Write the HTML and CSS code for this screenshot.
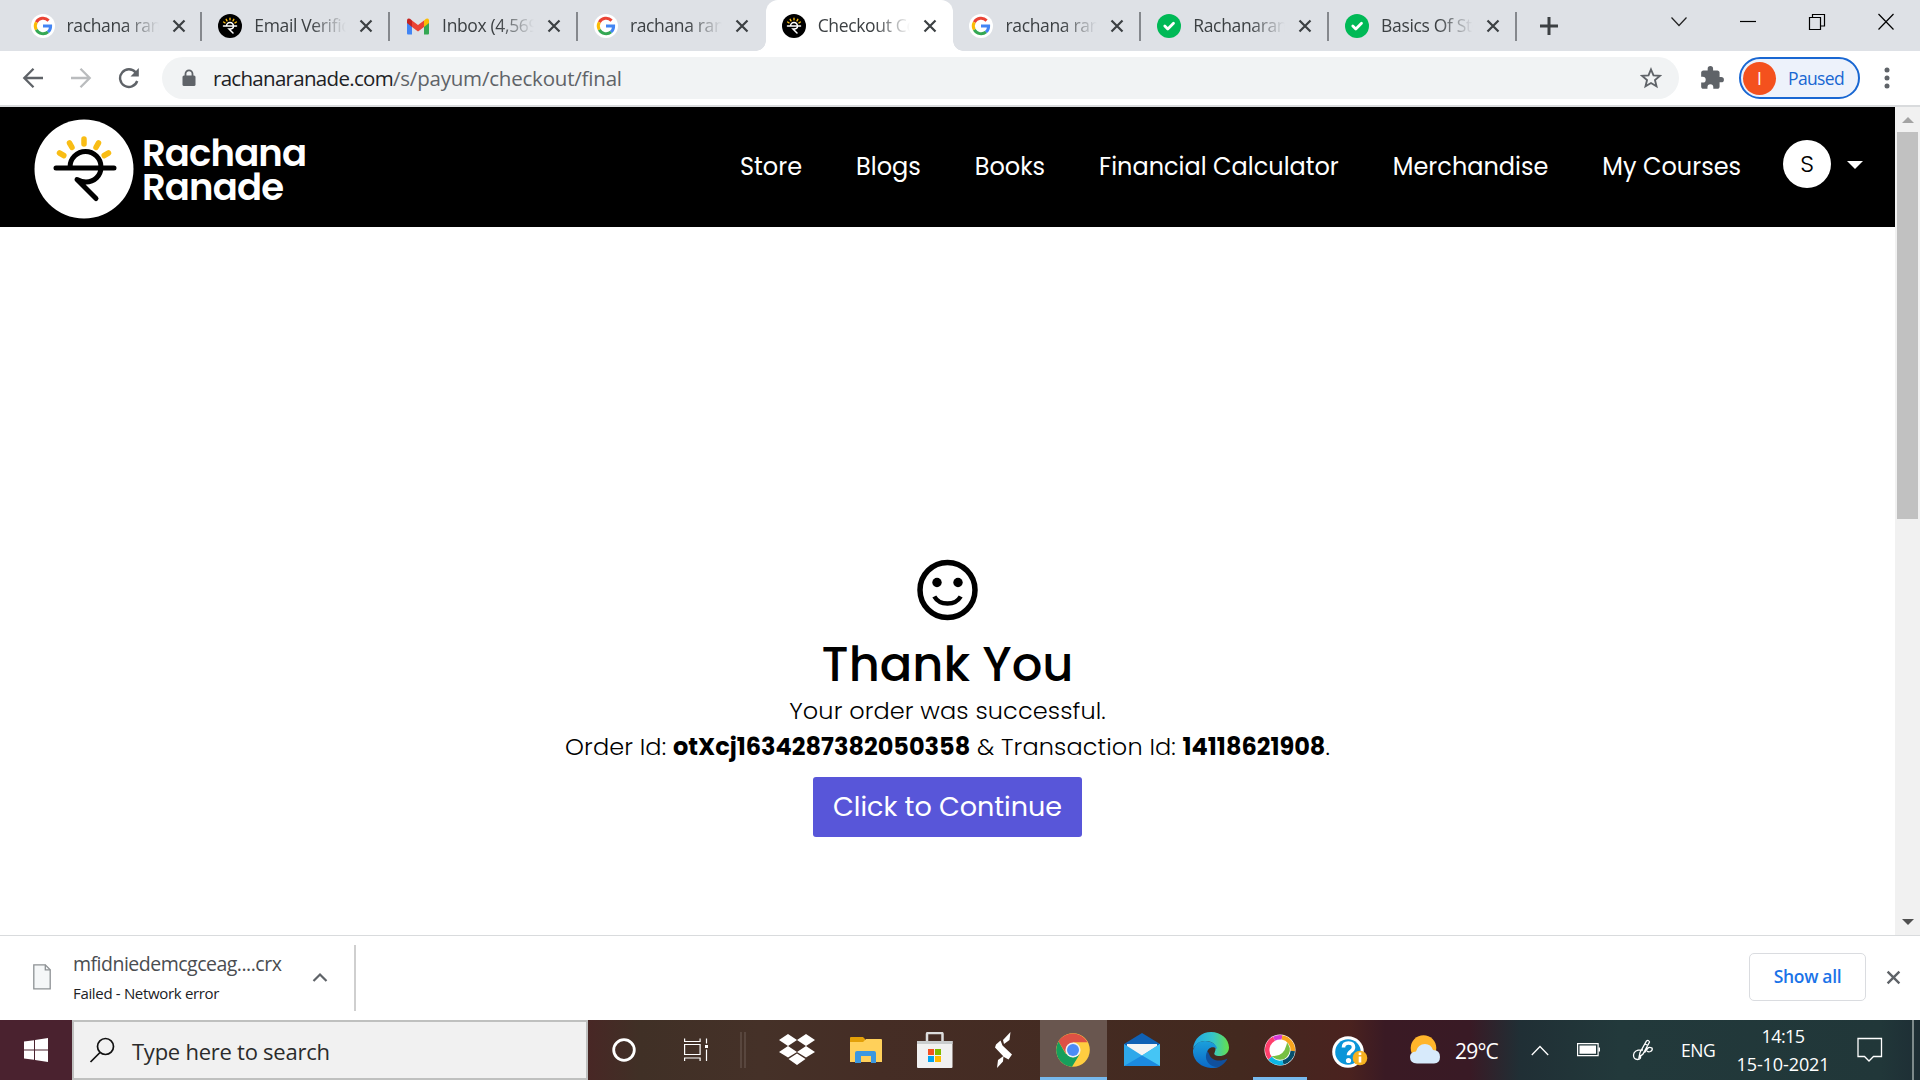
FILE: index.html
```html
<!DOCTYPE html>
<html lang="en">
<head>
<meta charset="utf-8">
<title>Checkout</title>
<link rel="stylesheet" href="styles.css">
</head>
<body>
<svg class="defs" width="0" height="0">
  <defs>
    <symbol id="google" viewBox="0 0 24 24">
      <circle cx="12" cy="12" r="12" fill="#fff"/>
      <path d="M5.3 8.2A7.8 7.8 0 0 1 17.6 6.6" fill="none" stroke="#ea4335" stroke-width="3"/>
      <path d="M5.3 8.2a7.8 7.8 0 0 0 0 7.6" fill="none" stroke="#fbbc05" stroke-width="3"/>
      <path d="M5.3 15.8a7.8 7.8 0 0 0 11.8 2.1" fill="none" stroke="#34a853" stroke-width="3"/>
      <path d="M12 12h7.6a7.8 7.8 0 0 1-2.6 6" fill="none" stroke="#4285f4" stroke-width="3"/>
    </symbol>
    <symbol id="rr" viewBox="0 0 24 24">
      <circle cx="12" cy="12" r="12" fill="#000"/>
      <path d="M5.500 12h13M8.500 12a3.500 3.500 0 0 1 7 0q0 3-3.500 3h-1l4 4" fill="none" stroke="#fff" stroke-width="1.500" stroke-linecap="round"/>
      <path d="M12 4.200v1.600M8.200 5.300l.8 1.500M15.800 5.300l-.8 1.500M5.600 8l1.400.8M18.400 8l-1.400.8" stroke="#f9bd15" stroke-width="1.400" stroke-linecap="round"/>
    </symbol>
    <symbol id="gmail" viewBox="0 0 24 24">
      <path d="M1 6v13.500q0 1 1 1h4V11z" fill="#4285f4"/>
      <path d="M23 6v13.500q0 1-1 1h-4V11z" fill="#34a853"/>
      <path d="M18 6.500l2-1.700q3-1.300 3 2V9l-5 4z" fill="#fbbc04"/>
      <path d="M6 6.500l6 4.500 6-4.500V13l-6 4.500L6 13z" fill="#ea4335"/>
      <path d="M6 6.500L4 4.800q-3-1.300-3 2V9l5 4z" fill="#c5221f"/>
    </symbol>
    <symbol id="ok" viewBox="0 0 24 24">
      <circle cx="12" cy="12" r="12" fill="#00b956"/>
      <path d="M7.800 12l3 3 5.700-5.700" fill="none" stroke="#fff" stroke-width="2.800" stroke-linecap="round" stroke-linejoin="round"/>
    </symbol>
    <symbol id="x" viewBox="0 0 14 14">
      <path d="M1.500 1.500l11 11M12.500 1.500l-11 11" stroke="currentColor" stroke-width="2.200"/>
    </symbol>
  </defs>
</svg>
<div class="screen">
  <div class="tabs">
    <div class="tab"><svg class="fav"><use href="#google"/></svg><span class="title">rachana ranade</span><svg class="close"><use href="#x"/></svg></div>
    <div class="tab"><svg class="fav"><use href="#rr"/></svg><span class="title">Email Verification</span><svg class="close"><use href="#x"/></svg></div>
    <div class="tab"><svg class="fav"><use href="#gmail"/></svg><span class="title">Inbox (4,569)</span><svg class="close"><use href="#x"/></svg></div>
    <div class="tab"><svg class="fav"><use href="#google"/></svg><span class="title">rachana ranade</span><svg class="close"><use href="#x"/></svg></div>
    <div class="tab active"><svg class="fav"><use href="#rr"/></svg><span class="title">Checkout Completed</span><svg class="close"><use href="#x"/></svg></div>
    <div class="tab"><svg class="fav"><use href="#google"/></svg><span class="title">rachana ranade</span><svg class="close"><use href="#x"/></svg></div>
    <div class="tab"><svg class="fav"><use href="#ok"/></svg><span class="title">Rachanaranade</span><svg class="close"><use href="#x"/></svg></div>
    <div class="tab"><svg class="fav"><use href="#ok"/></svg><span class="title">Basics Of Stock</span><svg class="close"><use href="#x"/></svg></div>
    <svg class="plus" width="18" height="18"><path d="M9 0v18M0 9h18" stroke="#3c4043" stroke-width="3"/></svg>
    <div class="window-buttons">
      <svg width="18" height="18"><path d="M1.500 4.500l7.500 8 7.500-8" fill="none" stroke="#222" stroke-width="1.200"/></svg>
      <svg width="18" height="18"><path d="M1 8.500h16" stroke="#000" stroke-width="1.200"/></svg>
      <svg width="18" height="18"><path d="M1.500 4.500h11v12h-11zM4.500 4.500v-3h12v11.500h-4" fill="none" stroke="#000" stroke-width="1.200"/></svg>
      <svg width="18" height="18"><path d="M1.500 1l15 15.500M16.500 1l-15 15.500" stroke="#000" stroke-width="1.200"/></svg>
    </div>
  </div>

  <div class="toolbar">
    <svg class="back" width="22" height="22"><path d="M21 11H2.500M11.500 1.800L2.300 11l9.200 9.200" fill="none" stroke="#5f6368" stroke-width="2.300"/></svg>
    <svg class="forward" width="22" height="22"><path d="M1 11h18.500M10.500 1.800l9.200 9.200-9.200 9.200" fill="none" stroke="#babcbe" stroke-width="2.300"/></svg>
    <svg class="reload" width="22" height="22"><path d="M17.700 5.500A8.800 8.800 0 1 0 19.200 14" fill="none" stroke="#5f6368" stroke-width="2.400"/><path d="M20.800 1v8.500H12.500z" fill="#5f6368"/></svg>
    <div class="omnibox">
      <svg class="lock" width="14" height="18"><rect x="0.500" y="6.500" width="13" height="10.500" rx="1.500" fill="#5f6368"/><path d="M3.500 7V4.800a3.500 3.500 0 0 1 7 0V7" fill="none" stroke="#5f6368" stroke-width="1.800"/></svg>
      <span class="url"><span class="host">rachanaranade.com</span><span class="path">/s/payum/checkout/final</span></span>
      <svg class="star" width="22" height="22" viewBox="0 0 22 22"><path d="M11 2.500l2.500 5.900 6.300.5-4.800 4.200 1.500 6.200-5.500-3.300-5.500 3.300L7 13.100 2.200 8.900l6.300-.5z" fill="none" stroke="#5f6368" stroke-width="1.900"/></svg>
    </div>
    <svg class="puzzle" width="26" height="26" viewBox="0 0 24 24"><path fill="#5f6368" d="M20.500 11H19V7c0-1.100-.9-2-2-2h-4V3.500a2.500 2.500 0 0 0-5 0V5H4c-1.100 0-2 .9-2 2v3.800h1.500a2.700 2.700 0 0 1 0 5.400H2V20c0 1.100.9 2 2 2h3.800v-1.500a2.700 2.700 0 0 1 5.400 0V22H17c1.100 0 2-.9 2-2v-4h1.500a2.500 2.500 0 0 0 0-5z"/></svg>
    <div class="profile"><span class="initial">I</span><span class="state">Paused</span></div>
    <svg class="dots" width="6" height="22"><g fill="#5f6368"><circle cx="3" cy="3" r="2.500"/><circle cx="3" cy="11" r="2.500"/><circle cx="3" cy="19" r="2.500"/></g></svg>
  </div>

  <div class="viewport">
    <div class="page">
      <header class="site-header">
        <svg class="mark" width="100" height="100" viewBox="0 0 100 100">
          <circle cx="50" cy="50" r="49.500" fill="#fff"/>
          <path d="M22 49h58M36 48a15.500 15.500 0 0 1 31 0C67 57 60 63 52 63Q48 63 43 60.500L62 79.500" fill="none" stroke="#000" stroke-width="5" stroke-linecap="round" stroke-linejoin="round"/>
          <path d="M50 20v5M35.500 24l2.500 4.300M64.500 24L62 28.300M25.500 34l4.300 2.500M74.500 34l-4.300 2.500" stroke="#f9bd15" stroke-width="5.500" stroke-linecap="round"/>
        </svg>
        <div class="brand"><span>Rachana</span><span>Ranade</span></div>
        <nav class="nav">
          <a>Store</a><a>Blogs</a><a>Books</a><a>Financial Calculator</a><a>Merchandise</a><a>My Courses</a>
        </nav>
        <span class="avatar">S</span>
        <svg class="caret" width="16" height="8"><path d="M0 0h16L8 8z" fill="#fff"/></svg>
      </header>
      <main class="receipt">
        <svg width="62" height="62" viewBox="0 0 62 62"><circle cx="30.500" cy="31" r="27.500" fill="none" stroke="#000" stroke-width="5.500"/><circle cx="20" cy="23.500" r="4.700"/><circle cx="41" cy="23.500" r="4.700"/><path d="M17.300 37.500q4 7 13.200 7t13.200-7" fill="none" stroke="#000" stroke-width="4.500"/></svg>
        <h1>Thank You</h1>
        <p class="line">Your order was successful.</p>
        <p class="line">Order Id: <b>otXcj1634287382050358</b> &amp; Transaction Id: <b>14118621908</b>.</p>
        <a class="button">Click to Continue</a>
      </main>
    </div>
    <div class="scrollbar">
      <svg width="12" height="6"><path d="M6 0l6 6H0z" fill="#a3a3a3"/></svg>
      <div class="thumb"></div>
      <svg class="down" width="12" height="6"><path d="M0 0h12L6 6z" fill="#505050"/></svg>
    </div>
  </div>

  <div class="downloads">
    <svg class="file" width="18" height="26"><path d="M.8.800h11.500l4.900 5v19H.8z" fill="#f5f7f8" stroke="#8d9194" stroke-width="1.300"/><path d="M12.300.8v5h4.900" fill="none" stroke="#8d9194" stroke-width="1.300"/></svg>
    <div class="file-text"><span class="name">mfidniedemcgceag....crx</span><span class="status">Failed - Network error</span></div>
    <svg class="up" width="16" height="10"><path d="M1.500 9L8 2.500 14.500 9" fill="none" stroke="#5f6368" stroke-width="2.200"/></svg>
    <div class="divider"></div>
    <div class="show-all">Show all</div>
    <svg class="dismiss"><use href="#x"/></svg>
  </div>

  <div class="taskbar">
    <div class="slot start"><svg width="24" height="24"><path d="M0 3.600l10-1.400v9.300H0zM11 2l13-2v11.500H11zM0 12.500h10v9.300L0 20.400zM11 12.500h13V24l-13-2z" fill="#fff"/></svg></div>
    <div class="search"><svg width="26" height="26"><circle cx="16.500" cy="9.500" r="8" fill="none" stroke="#111" stroke-width="1.700"/><path d="M11 15.500L1.500 25" stroke="#111" stroke-width="1.700"/></svg><span class="hint">Type here to search</span></div>
    <div class="slot w72"><svg width="24" height="24"><circle cx="12" cy="12" r="10.300" fill="none" stroke="#fff" stroke-width="2.800"/></svg></div>
    <div class="slot w72"><svg width="24" height="24" fill="none" stroke="#fff" stroke-width="1.200"><path d="M.6 6.500h15.500v10H.6zM.6.500v3h15.500v-3M.6 23v-3h15.500v3M22.500.500v5M22.500 11.500V23"/><path d="M21 7h3v3h-3z" fill="#fff" stroke="none"/></svg></div>
    <div class="slot w22"><svg width="6" height="36"><path d="M1 0v36M5 0v36" stroke="#6d5d55" stroke-width="1"/></svg></div>
    <div class="slot w86"><svg width="36" height="32"><path d="M9 0l9 6-9 6-9-6zM27 0l9 6-9 6-9-6zM9 12l9 6-9 5.500L0 18zM27 12l9 6-9 5.500L18 18zM18 19.500l8.500 5.500L18 31l-8.500-6z" fill="#fff"/></svg></div>
    <div class="slot w52"><svg width="32" height="28"><path d="M0 2q0-1 1-1h12l2 2v5H0z" fill="#e3a008"/><path d="M0 6h13l3-3h15q1 0 1 1v22H0z" fill="#ffd05a"/><path d="M5 27V17q0-2 2-2h17q2 0 2 2v10h-5v-7H11v7z" fill="#3b97e0"/></svg></div>
    <div class="slot w85"><svg width="36" height="36"><path d="M10 10V2q0-1 1-1h13.500q1 0 1 1v8" fill="none" stroke="#ddd" stroke-width="2.500"/><path d="M0 9h35.500v26q0 1-1 1H1q-1 0-1-1z" fill="#f1f1f1"/><path d="M0 9h35.500v3H0z" fill="#c9cccd"/><path d="M11 17h6v6h-6z" fill="#f25022"/><path d="M18 17h6v6h-6z" fill="#7fba00"/><path d="M11 24h6v6h-6z" fill="#00a4ef"/><path d="M18 24h6v6h-6z" fill="#ffb900"/></svg></div>
    <div class="slot w53"><svg width="18" height="36"><path d="M15.500 0L14.500 8 9 12l-1-4zM5.500 8.500l2 5L17 22.500 13.500 27.500 9 25 0 15.500 1 12.500zM2 36l1-8 5.500-4-.5 5.500z" fill="#fff"/></svg></div>
    <div class="slot chrome"><svg width="34" height="34" viewBox="0 0 34 34"><circle cx="17" cy="17" r="16.800" fill="#ffcd40"/><path d="M31.500 9.200H17v7L10 20.500 2.500 8.500A16.800 16.800 0 0 1 31.500 9.200z" fill="#de5144"/><path d="M2.500 8.500A16.800 16.800 0 0 0 16 33.800l7.500-12.300L17 24.500l-7.500-4z" fill="#169f5c"/><circle cx="17" cy="17" r="7.600" fill="#f1f1f1"/><circle cx="17" cy="17" r="6" fill="#4c8bf5"/></svg></div>
    <div class="slot w70"><svg width="36" height="34"><path d="M0 11L18 0l18 11v5H0z" fill="#0f61b5"/><path d="M3 11h30v9L18 30 3 20z" fill="#f4f4f4"/><path d="M0 11l18 11.500L36 11v22H0z" fill="#2ea8ea"/><path d="M36 11L18 22.500 36 33z" fill="#45c5f5"/><path d="M18 22.500L0 33h36z" fill="#1b8ae0"/></svg></div>
    <div class="slot w68"><svg width="36" height="36" viewBox="0 0 36 36">
      <defs><linearGradient id="eg" x1="0" x2="1"><stop offset="0" stop-color="#1fa6e6"/><stop offset=".55" stop-color="#35c5ca"/><stop offset="1" stop-color="#66e04a"/></linearGradient><linearGradient id="eb" x1="0" y1="0" x2="0" y2="1"><stop offset="0" stop-color="#1ba0dc"/><stop offset="1" stop-color="#0b69c7"/></linearGradient></defs>
      <path d="M0 17C1 6 9 0 18 0c10 0 18 7 18 15.500 0 6-5 8.500-9.500 8.500-4 0-6-1.500-5-3C25 13 20 9 12 9 6 9 2 13 0 17z" fill="url(#eg)"/>
      <path d="M0 18C2 12 6 9 12 9c7 0 12 4 12 8-4-4-11-1-10 6 1 6 6 10 12 12-13 4-27-4-26-17z" fill="url(#eb)"/>
      <path d="M14.500 19c-5 9 3 17 11.500 16 4-2 7-5 8.500-8.500-8 4-16 2-18-3.500q-.8-2-2-4z" fill="#10509d"/></svg></div>
    <div class="slot webex"><svg width="32" height="32"><circle cx="16" cy="16" r="15.500" fill="#fff"/><g fill="none" stroke-width="4.500"><path d="M10 4.700A12.800 12.800 0 0 1 18 3.400" stroke="#d63bd8"/><path d="M18 3.400A12.800 12.800 0 0 1 28.800 17" stroke="#f7a41d"/><path d="M28.800 17A12.800 12.800 0 0 1 19 28.500" stroke="#07506c"/><path d="M19 28.500A12.800 12.800 0 0 1 6 24" stroke="#0db5e5"/><path d="M6 24A12.800 12.800 0 0 1 10 4.700" stroke="#ff3f6c"/></g><path d="M23.500 11a9 9 0 0 1-13 12q10 0 13-12z" fill="#77c043" stroke="#77c043" stroke-width="2"/></svg></div>
    <div class="slot w70"><svg class="help" width="36" height="34"><circle cx="16" cy="17" r="15.800" fill="#fff"/><circle cx="16" cy="17" r="12.800" fill="#0a95d8"/><path d="M11.500 12.500q0-4.500 5-4.500t5 4.200q0 2.300-2.500 4-2.500 1.600-2.500 4" fill="none" stroke="#fff" stroke-width="3.600"/><circle cx="16.500" cy="25.500" r="2.600" fill="#fff"/><circle cx="28" cy="23" r="7.300" fill="#f5b120"/><path d="M28 21.500v6M28 17.500v2.500" stroke="#fff" stroke-width="2.600"/></svg></div>
    <div class="weather"><svg width="32" height="30"><circle cx="14.500" cy="13" r="12.800" fill="#ffb52b"/><path d="M8 28.500q-7-.5-7-6.500 0-5 6-5.500Q9 9 16 9q6 0 8 6 7 0 7 7 0 6-6 6.500z" fill="#d7eafb"/></svg><span class="temp">29°C</span></div>
    <svg class="chev" width="18" height="11"><path d="M.8 10L9 1.500 17.200 10" fill="none" stroke="#fff" stroke-width="1.300"/></svg>
    <svg class="battery" width="24" height="14"><path d="M.6.600h20.500v12H.6z" fill="none" stroke="#fff" stroke-width="1.200"/><path d="M2.500 2.500h16.500v8.200H2.500zM21.500 4.500h1.500v4h-1.500z" fill="#fff"/></svg>
    <svg class="pen" width="22" height="22" fill="none" stroke="#fff" stroke-width="1.300"><path d="M7 18.500L8 13.500 14.500 2q2-1.500 3 1L11 15zM13 5l3 1.500M11 11Q2 10.500 1.500 16q0 4.500 4 4.500 4 0 3-4.500M12.500 13.500l3-4q1.500-2 4.500-.5 1 2-1.500 3.500-2 1-3.500-.5"/></svg>
    <span class="lang">ENG</span>
    <div class="clock"><span class="time">14:15</span><span class="date">15-10-2021</span></div>
    <svg class="note" width="26" height="26"><path d="M1 1.500h23.500v18h-8L12 24l-4.500-4.500H1z" fill="none" stroke="#fff" stroke-width="1.300"/></svg>
    <div class="peek"></div>
  </div>
</div>
</body>
</html>
```
FILE: styles.css
```css
* { box-sizing: border-box; }
body { margin: 0; font-family: "Open Sans", "Noto Sans", sans-serif; color: #000; background: #fff; }
svg { display: block; flex: none; }
.defs { position: absolute; }
.screen { width: 1920px; height: 1080px; display: flex; flex-direction: column; overflow: hidden; white-space: nowrap; }
.screen > div { flex: none; }

/* Tab strip */
.tabs { height: 51px; background: #dee1e6; display: flex; align-items: stretch; padding-left: 14.5px; }
.tab { width: 187.8px; flex: none; display: flex; align-items: center; padding-left: 16px; background: linear-gradient(#85888d, #85888d) right 12px / 2px 29px no-repeat; }
.tab:nth-child(4), .tab.active { background: none; }
.tab.active { background: #fff; border-radius: 12px 12px 0 0; position: relative; }
.tab.active::before, .tab.active::after { content: ""; position: absolute; bottom: 0; width: 10px; height: 10px; }
.tab.active::before { left: -10px; background: radial-gradient(circle at 0 0, transparent 9.5px, #fff 10px); }
.tab.active::after { right: -10px; background: radial-gradient(circle at 100% 0, transparent 9.5px, #fff 10px); }
.fav { width: 24px; height: 24px; }
.title { width: 92px; margin: 0 1px 1px 12px; overflow: hidden; font-size: 17.5px; letter-spacing: -0.35px; color: #3c4043; -webkit-mask-image: linear-gradient(90deg, #000 62%, transparent); mask-image: linear-gradient(90deg, #000 62%, transparent); }
.close { width: 14px; height: 14px; margin-left: 12px; color: #3c4043; }
.plus { margin: 17px 0 0 23px; }
.window-buttons { display: flex; gap: 51px; margin: 13px 0 0 112px; }

/* Toolbar */
.toolbar { height: 56px; border-bottom: 2px solid #d9dbdd; display: flex; align-items: center; }
.back { margin-left: 22px; }
.forward { margin-left: 26px; }
.reload { margin-left: 26px; }
.omnibox { width: 1517px; height: 42px; margin-left: 22px; border-radius: 21px; background: #f1f3f4; display: flex; align-items: center; padding: 0 17px 0 20px; }
.url { margin: 0 auto 0 17px; font-size: 20.5px; color: #5f6368; }
.host { color: #202124; letter-spacing: -0.7px; }
.path { letter-spacing: -0.2px; }
.puzzle { margin-left: 20px; }
.profile { width: 121px; height: 42px; margin-left: 14px; border: 2px solid #1967d2; border-radius: 21px; background: #edf2fb; display: flex; align-items: center; padding-left: 2px; color: #1967d2; font-size: 17.5px; }
.initial { width: 33px; height: 33px; border-radius: 50%; background: #f4511e; color: #fff; text-align: center; line-height: 33px; }
.state { margin-left: 12px; letter-spacing: -0.65px; }
.dots { margin-left: 24px; }

/* Web page */
.viewport { height: 828px; display: flex; }
.page { width: 1895px; }
.site-header { height: 120px; background: #000; color: #fff; display: flex; align-items: flex-start; font-family: Poppins, Inter, "Open Sans", sans-serif; }
.mark { margin: 12px 0 0 34px; }
.brand { width: 170px; margin: 29px 0 0 8px; font-size: 37px; font-weight: 600; line-height: 34px; letter-spacing: -0.85px; display: flex; flex-direction: column; align-items: flex-start; }
.nav { display: flex; gap: 54px; margin: 45px 0 0 428px; font-size: 24px; line-height: 30px; }
.avatar { width: 48px; height: 48px; margin: 33px 0 0 auto; border-radius: 50%; background: #fff; color: #000; font-size: 24px; font-weight: 300; line-height: 48px; text-align: center; }
.caret { margin: 54px 32px 0 16px; }
.receipt { display: flex; flex-direction: column; align-items: center; padding-top: 332px; font-family: Poppins, Inter, "Open Sans", sans-serif; }
.receipt h1 { margin: 16px 0 0; font-size: 48px; font-weight: 500; line-height: 56px; }
.line { margin: 0; font-size: 24px; font-weight: 300; line-height: 36px; letter-spacing: 0.12px; }
.line b { font-weight: 700; letter-spacing: 0; }
.button { width: 269px; height: 60px; margin-top: 12px; border-radius: 3px; background: #5856d9; color: #fff; font-size: 27px; line-height: 60px; text-align: center; }
.scrollbar { width: 25px; background: #f1f1f1; display: flex; flex-direction: column; align-items: center; padding: 10px 0; }
.thumb { width: 21px; height: 387px; margin-top: 9px; background: #c1c1c1; }
.down { margin-top: auto; }

/* Download shelf */
.downloads { height: 85px; border-top: 1px solid #d9dbdd; display: flex; align-items: center; padding-bottom: 2px; }
.file { margin-left: 33px; }
.file-text { width: 239px; margin: 2px 0 0 22px; display: flex; flex-direction: column; align-items: flex-start; }
.name { font-size: 19.5px; line-height: 30px; letter-spacing: -0.5px; color: #4a4d51; }
.status { font-size: 15px; line-height: 28px; letter-spacing: -0.33px; color: #202124; }
.divider { width: 2px; height: 66px; margin: 2px 0 0 26px; background: #cfcfcf; }
.show-all { width: 117px; height: 48px; margin-left: auto; border: 1px solid #dadce0; border-radius: 5px; color: #1a73e8; font-size: 17.5px; font-weight: 600; line-height: 45px; letter-spacing: -0.3px; text-align: center; }
.dismiss { width: 15px; height: 15px; margin: 0 19px 0 20px; color: #5f6368; }

/* Taskbar */
.taskbar { height: 60px; display: flex; align-items: center; color: #fff; background: linear-gradient(90deg, #4a222f 0, #4a222f 70px, #482725 588px, #403026 640px, #453128 760px, #452d25 880px, #43291f 1240px, #4a221f 1350px, #3a1a24 1385px, #391a25 1470px, #202f35 1520px, #22393b 1620px, #213739 1880px, #1e2e35 1920px); }
.slot { height: 60px; flex: none; display: flex; align-items: center; justify-content: center; }
.start { width: 72px; }
.search { width: 516px; height: 60px; border: 2px solid #bfc0bf; background: #f1f1f1; color: #2b2b2b; display: flex; align-items: center; padding-left: 15px; gap: 17px; font-size: 22px; letter-spacing: -0.25px; }
.hint { margin-top: 2px; }
.w72 { width: 72px; } .w22 { width: 22px; } .w86 { width: 86px; } .w52 { width: 52px; } .w85 { width: 85px; } .w53 { width: 53px; } .w70 { width: 70px; } .w68 { width: 68px; }
.chrome { width: 67px; margin-left: 10px; background: #69564f; border-bottom: 3px solid #76b9ed; }
.chrome svg { margin-top: 3px; margin-right: 1px; }
.webex { width: 54px; margin: 0 8px; border-bottom: 3px solid #76b9ed; }
.webex svg { margin-top: 3px; }
.help { margin: 3px 1px 0 0; }
.weather { width: 100px; margin-left: 24px; display: flex; align-items: center; gap: 14px; font-size: 21px; letter-spacing: -0.8px; }
.temp { margin-top: 2px; }
.chev { margin-left: 22px; }
.battery { margin-left: 28px; }
.pen { margin-left: 31px; }
.lang { width: 36px; margin-left: 27px; font-size: 17.5px; letter-spacing: -0.5px; }
.clock { width: 96px; margin-left: 18px; display: flex; flex-direction: column; align-items: center; font-size: 18px; line-height: 28px; }
.time { letter-spacing: -0.6px; }
.date { letter-spacing: -0.1px; }
.note { margin-left: 26px; }
.peek { width: 2px; height: 60px; margin: 0 6px 0 auto; background: #7d898b; }
```
